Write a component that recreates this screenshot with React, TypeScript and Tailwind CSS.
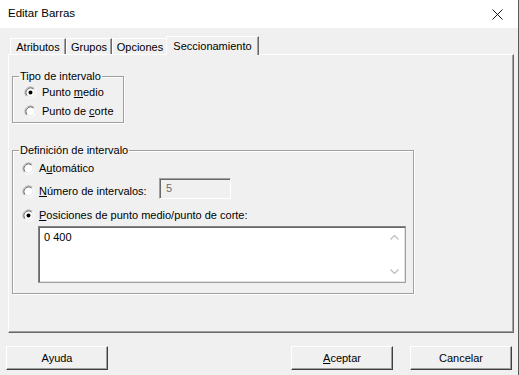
import React, {JSX} from "react";

const Radio = ({checked}: {checked?: boolean}): JSX.Element => (
    <svg width="13" height="13" viewBox="0 0 13 13" className="shrink-0">
        <circle cx="6.5" cy="6.5" r="5.5" fill="white"/>
        <path d="M2.61 10.39 A5.5 5.5 0 0 1 10.39 2.61" fill="none" stroke="#a0a0a0" strokeWidth="1"/>
        <path d="M10.39 2.61 A5.5 5.5 0 0 1 2.61 10.39" fill="none" stroke="#ffffff" strokeWidth="1"/>
        <path d="M3.32 9.68 A4.5 4.5 0 0 1 9.68 3.32" fill="none" stroke="#696969" strokeWidth="1"/>
        <path d="M9.68 3.32 A4.5 4.5 0 0 1 3.32 9.68" fill="none" stroke="#e3e3e3" strokeWidth="1"/>
        {checked && <circle cx="6.5" cy="6.5" r="2" fill="black"/>}
    </svg>
);

const Tab = ({label, width, selected}: {label: string; width: string; selected?: boolean}): JSX.Element => (
    <div
        className={
            selected
                ? `${width} h-[19px] bg-[#f0f0f0] border-t border-l border-white border-r border-r-[#696969] shadow-[inset_-1px_0_0_#a0a0a0] flex items-start justify-center pt-[1px] leading-[16px] -ml-[2px]`
                : `${width} h-[16px] mb-[1px] bg-[#f0f0f0] border-t border-l border-white border-r border-r-[#696969] shadow-[inset_-1px_0_0_#a0a0a0] flex items-center justify-center leading-[14px]`
        }
    >
        {label}
    </div>
);

const Button = ({children, className}: {children: React.ReactNode; className?: string}): JSX.Element => (
    <div className={`w-[102px] h-[24px] bg-[#f0f0f0] border-t border-l border-white border-r border-b border-r-[#404040] border-b-[#404040] shadow-[inset_-1px_-1px_0_#a0a0a0] flex items-center justify-center ${className ?? ""}`}>
        {children}
    </div>
);

const App: React.FC = (): JSX.Element => {
    return (
        <div className="w-[519px] h-[375px] bg-[#f0f0f0] border-r border-[#5a5a5a] text-[11px] text-black font-['Liberation_Sans',Arial,sans-serif] flex flex-col overflow-hidden">
            {/* title bar */}
            <div className="h-[28px] bg-white flex items-center justify-between pl-[8px] pr-[15px] shrink-0 text-[11.5px]">
                <span>Editar Barras</span>
                <svg width="11" height="11" viewBox="0 0 11 11">
                    <path d="M0.5 0.5 L10.5 10.5 M10.5 0.5 L0.5 10.5" stroke="black" strokeWidth="0.9"/>
                </svg>
            </div>

            {/* tabs */}
            <div className="mt-[8px] ml-[10px] h-[19px] flex items-end relative z-10 shrink-0">
                <Tab label="Atributos" width="w-[56px]"/>
                <Tab label="Grupos" width="w-[46px]"/>
                <Tab label="Opciones" width="w-[56px]"/>
                <Tab label="Seccionamiento" width="w-[93px]" selected/>
            </div>

            {/* tab pane */}
            <div className="-mt-[1px] ml-[8px] w-[506px] h-[279px] shrink-0 border-t border-l border-white border-r border-b border-r-[#696969] border-b-[#696969] shadow-[inset_-1px_-1px_0_#a0a0a0] pl-[3px] flex flex-col">
                <fieldset className="mt-[13px] w-[112px] h-[55px] border border-[#a0a0a0] shadow-[1px_1px_0_white,inset_1px_1px_0_white]">
                    <legend className="ml-[6px] px-[1px] leading-[16px]">Tipo de intervalo</legend>
                    <div className="-mt-[1px] flex flex-col">
                        <div className="h-[19px] flex items-center gap-[5px] pl-[11px]">
                            <Radio checked/>
                            <span>Punto <u>m</u>edio</span>
                        </div>
                        <div className="h-[19px] flex items-center gap-[5px] pl-[11px]">
                            <Radio/>
                            <span>Punto de <u>c</u>orte</span>
                        </div>
                    </div>
                </fieldset>

                <fieldset className="mt-[19px] w-[402px] h-[152px] border border-[#a0a0a0] shadow-[1px_1px_0_white,inset_1px_1px_0_white]">
                    <legend className="ml-[6px] px-[1px] leading-[16px]">Definición de intervalo</legend>
                    <div className="flex flex-col">
                        <div className="h-[20px] flex items-center gap-[4px] pl-[9px]">
                            <Radio/>
                            <span>A<u>u</u>tomático</span>
                        </div>
                        <div className="h-[29px] flex items-start">
                            <div className="w-[146px] mt-[5px] h-[16px] flex items-center gap-[4px] pl-[9px]">
                                <Radio/>
                                <span><u>N</u>úmero de intervalos:</span>
                            </div>
                            <div className="w-[72px] h-[21px] border border-t-[#a0a0a0] border-l-[#a0a0a0] border-b-white border-r-white shadow-[inset_1px_1px_0_#696969] pl-[6px] leading-[18px] text-[#6d6d6d]">
                                5
                            </div>
                        </div>
                        <div className="h-[16px] flex items-center gap-[4px] pl-[9px]">
                            <Radio checked/>
                            <span><u>P</u>osiciones de punto medio/punto de corte:</span>
                        </div>
                        <div className="mt-[3px] ml-[25px] w-[368px] h-[57px] border border-[#828282] border-b-[#a0a0a0] border-r-[#a0a0a0] shadow-[inset_1px_1px_0_#696969,inset_-1px_-1px_0_#e3e3e3] bg-white flex">
                            <div className="flex-1 pl-[5px] pt-[2px] leading-[16px]">0 400</div>
                            <div className="w-[17px] mr-[2px] my-[2px] flex flex-col items-center justify-between py-[6px]">
                                <svg width="9" height="5" viewBox="0 0 9 5">
                                    <path d="M0.5 4.5 L4.5 0.5 L8.5 4.5" fill="none" stroke="#bfbfbf" strokeWidth="1.3"/>
                                </svg>
                                <svg width="9" height="5" viewBox="0 0 9 5">
                                    <path d="M0.5 0.5 L4.5 4.5 L8.5 0.5" fill="none" stroke="#bfbfbf" strokeWidth="1.3"/>
                                </svg>
                            </div>
                        </div>
                    </div>
                </fieldset>
            </div>

            {/* buttons */}
            <div className="mt-[13px] flex items-center shrink-0">
                <Button className="ml-[6px]">Ayuda</Button>
                <Button className="ml-[183px]"><span><u>A</u>ceptar</span></Button>
                <Button className="ml-[17px]">Cancelar</Button>
            </div>
        </div>
    );
}

export default App;
